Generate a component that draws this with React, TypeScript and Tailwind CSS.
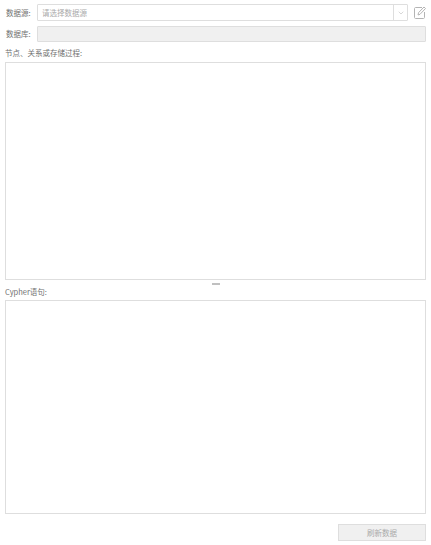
import { ChevronDown } from "lucide-react";

export default function App() {
  const font = { fontFamily: '"Noto Sans CJK SC", "Open Sans", sans-serif' };
  return (
    <div style={font} className="w-[431px] h-[545px] bg-white flex flex-col pl-[5px] pr-[5px] text-[7.5px] text-[#707070]">
      <div className="flex items-center h-[17px] mt-[4px]">
        <span className="w-[32px] shrink-0 pl-[1px]">数据源:</span>
        <div className="w-[371px] flex items-center h-[17px] border border-[#dedede] rounded-[1px]">
          <span className="flex-1 pl-[4px] text-[#aaa]">请选择数据源</span>
          <div className="w-[14px] h-full border-l border-[#dedede] flex items-center justify-center">
            <ChevronDown size={8} color="#b0b0b0" strokeWidth={1.5} />
          </div>
        </div>
        <div className="flex-1 flex justify-end">
          <svg width="12" height="13" viewBox="0 0 12 13" fill="none" stroke="#b4b4b4" strokeWidth="1">
            <path d="M8 1.5H1.5C1 1.5 .5 2 .5 2.5v9c0 .5.5 1 1 1H9.5c.5 0 1-.5 1-1V6" />
            <path d="M4 9 4.6 6.6 10 1l1.5 1.5L6 8.3z" />
          </svg>
        </div>
      </div>
      <div className="flex items-center h-[16px] mt-[5px]">
        <span className="w-[32px] shrink-0 pl-[1px]">数据库:</span>
        <div className="flex-1 h-full bg-[#f0f0f0] border border-[#dedede] rounded-[1px]" />
      </div>
      <div className="h-[12px] mt-[5px] leading-[12px]">节点、关系或存储过程:</div>
      <div className="h-[218px] mt-[3px] border border-[#dedede] bg-white" />
      <div className="h-[8px] flex items-center justify-center">
        <div className="w-[8px] h-[2px] bg-[#c0c0c0]" />
      </div>
      <div className="h-[12px] leading-[12px] -mt-[2px]">Cypher语句:</div>
      <div className="h-[214px] mt-[2px] border border-[#dedede] bg-white" />
      <div className="flex justify-end mt-[10px]">
        <button className="w-[88px] h-[17px] bg-[#f0f0f0] border border-[#dedede] text-[#aaa] text-[7.5px] flex items-center justify-center">刷新数据</button>
      </div>
    </div>
  );
}
